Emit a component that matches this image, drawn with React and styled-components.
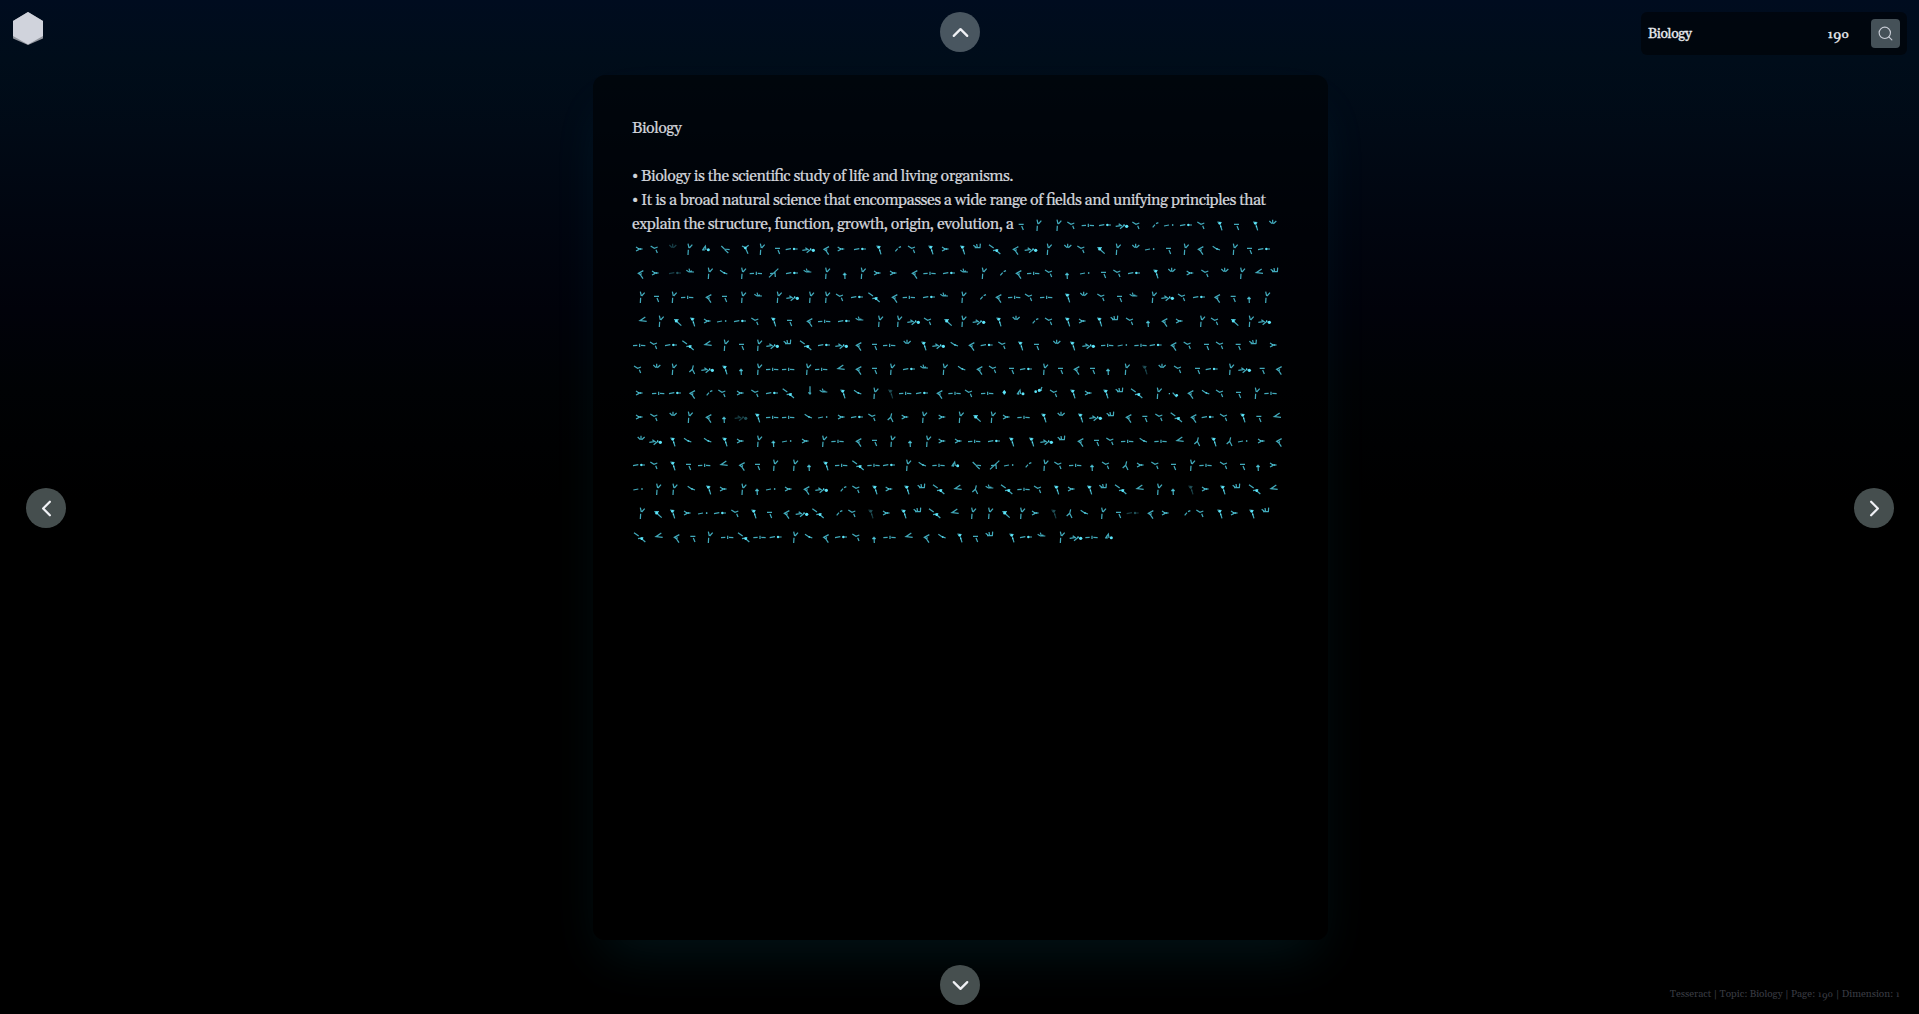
import React from "react";
import styled, { createGlobalStyle } from "styled-components";
import { ChevronUp, ChevronDown, ChevronLeft, ChevronRight, Search } from "lucide-react";

const GlobalStyle = createGlobalStyle`
  * { box-sizing: border-box; }
  body {
    margin: 0;
    background: #000;
    font-family: Gelasio, Georgia, "Liberation Serif", serif;
    font-feature-settings: "liga" 1;
    overflow: hidden;
  }
`;

const Page = styled.div`
  width: 100%;
  height: 100vh;
  display: grid;
  grid-template-columns: 593px 735px 1fr;
  grid-template-rows: 75px 865px 1fr;
  background: linear-gradient(
    to bottom,
    #000c1f 0,
    #000d1a 60px,
    #010a16 130px,
    #01050f 230px,
    #01020a 310px,
    #000204 390px,
    #000 500px
  );
`;

const TopLeft = styled.div`
  padding: 12px 13px;
  svg { display: block; }
`;

const Centered = styled.div`
  display: flex;
  justify-content: center;
  align-items: flex-start;
  padding: ${(p) => p.$top}px 1px 0 0;
`;

const TopRight = styled.div`
  display: flex;
  justify-content: flex-end;
  align-items: flex-start;
  padding: 12px 12px 0 0;
`;

const Side = styled.div`
  display: flex;
  justify-content: ${(p) => (p.$end ? "flex-end" : "flex-start")};
  align-items: flex-start;
  padding: 413px 25px 0 26px;
`;

const RoundButton = styled.button`
  width: 40px;
  height: 40px;
  padding: 0;
  border: 0;
  border-radius: 50%;
  display: flex;
  align-items: center;
  justify-content: center;
  color: #f0f1f5;
  background: ${(p) => p.$tone};
  position: relative;
`;

const SearchBar = styled.div`
  width: 266px;
  height: 43px;
  border-radius: 6px;
  background: rgba(0, 0, 0, 0.5);
  display: flex;
  align-items: center;
  padding: 0 7px;
  color: #e8eaee;
  font-size: 14px;
  letter-spacing: -0.42px;
  line-height: 20px;
  -webkit-text-stroke: 0.3px currentColor;
`;

const Topic = styled.span`
  width: 179px;
`;

const PageNumber = styled.span`
  flex: 1;
  letter-spacing: 0;
`;

const SearchButton = styled.button`
  width: 29px;
  height: 29px;
  padding: 0;
  border: 0;
  border-radius: 4px;
  background: #455158;
  color: #c9cdd6;
  display: flex;
  align-items: center;
  justify-content: center;
`;

const Panel = styled.main`
  border-radius: 12px;
  background: rgba(0, 0, 0, 0.5);
  padding: 41px 39px 40px;
  box-shadow: 0 25px 50px -12px rgba(20, 200, 238, 0.1);
  color: #d0d3da;
  font-size: 16px;
  letter-spacing: -0.525px;
  line-height: 24px;
  -webkit-text-stroke: 0.2px currentColor;
`;

const Line = styled.div`
  height: 24px;
  white-space: pre;
  display: flex;
`;

const Script = styled.svg`
  display: block;
  flex: none;
  width: ${(p) => p.$width}px;
  height: 24px;
  fill: none;
  stroke: #4fd0e4;
  stroke-width: 3.7;
  overflow: visible;
`;

const Footer = styled.footer`
  display: flex;
  justify-content: flex-end;
  align-items: flex-start;
  padding: 47px 19px 0 0;
  font-size: 10px;
  line-height: 14px;
  letter-spacing: -0.03px;
  color: #3a3c43;
  white-space: nowrap;
`;

const SmallDigit = styled.span`
  display: inline-block;
  transform: scaleX(1.2);
  font-size: 0.76em;
  line-height: 0;
  margin: 0 0.08em;
`;

const LowDigit = styled.span`
  line-height: 0;
  vertical-align: -0.18em;
`;

function OldStyle({ value }) {
  return [...String(value)].map((d, i) =>
    "012".includes(d) ? <SmallDigit key={i}>{d}</SmallDigit> : <LowDigit key={i}>{d}</LowDigit>
  );
}

/* Each sign: stroke path plus optional bright dots [x, y, r], around its own centre. */
const SIGNS = {
  k: ["M-4-17L-1-4M9-14L0-4M-3 1L-4 17"],
  y: ["M-13-10L-2-3L8-7M3 1L7 11"],
  w: ["M-10-13L-2-5M0-17V-5M11-13L2-5"],
  f: ["M-10-7L-2-2M-10 5L-2 1", [[-1, -1, 2.5], [4, -1, 2]], "M-2-1H10"],
  h: ["M-18 1L-5 0M2-5V5M6 0L19 1"],
  e: ["M-18 1L-2-2M4-1H18", [[7, -1, 3.5]]],
  p: ["M-18 3L-3 1M-9-5L1 2M-5 10L9-1", [[15, 3, 5], [7, -1, 2]]],
  c: ["M7-8L-8 0L-2 4L6 16M1 0L-1 5"],
  g: ["M-8-10L5-8M1-2L6 15", [[-1, -6, 4], [2, 4, 2]]],
  m: ["M-9-3H6M0 2L5 14"],
  i: ["M-7 6L0-2M3-5L10-8"],
  l: ["M7-13L-9-2L11 0"],
  s: ["M-11-10L-2-1L14 1M-1 1L10 11"],
  d: ["M-10 3L-1-10L1 2M-5-6V4", [[8, 1, 4.5]]],
  r: ["M-11-10L-1-5L9-12M-1-5L7 13", [[-1, -4, 4]]],
  n: ["M-11-9L0-2L11 2", [[2, -1, 2.5]]],
  u: ["M-11-9L-3-4H12M-3-14L0-5M6-8L1-4"],
  z: ["M15-14L-13 12M-10 1L5-1L6 11"],
  t: ["M1-2L2 17M-4 5L1 0L6 5", [[1, 4, 2]]],
  b: ["M-18-14L-4-4M-6 4L10 1M3 3L16 14", [[5, 4, 4]]],
  a: ["M4-12L1 0L-8 8M1 0L8 14"],
  o: ["M-15 2L0-1", [[11, -1, 2.5]]],
  v: ["M0 2L12 13M-10-5H4", [[-3, -1, 4.8]]],
  x: ["M-12-12L-4-6M-2-16L0-5M9-17L8-4M-8-5H9"],
  j: ["M0-21V1M-5-3L0 2L3-2"],
  1: ["M0-10V4", [[0, -3, 5]]],
  2: ["M7-10L11-19M0-6L11-10", [[-8, -5, 4], [3, -9, 4.5]]],
  3: ["M-2-2L10 11", [[-12, 1, 2], [10, 6, 4]]],
};

const FIRST = "m1205 k1255 k1315 y1355 h1403 e1455 p1505 y1550 i1605 o1647 e1698 y1745 g1800 m1851 g1907 w1958";

/* Left half | right half of every row, positions in thirds of a pixel. */
const ROWS = [
  "f58 y105 W158 k208 d257 s315 r377 k425 m474 e515 p565 c620 f663 e720 g777 i833 y877 g933 f976|g38 x82 b135 c198 p242 k296 w353 y395 v452 k503 w557 o600 m657 k707 c753 n799 k854 m900 e942",
  "c63 f106 E165 u210 k269 n311 k369 h407 z460 e516 u562 k621 t673 k728 f772 f820 c885 h928 e987|u42 k101 i158 c207 h249 y298 t350 o405 m462 y503 e552 g618 w665 f720 y767 w824 k876 l928 x974",
  "k65 m111 k161 h201 c267 m315 k369 u414 k476 p517 k573 k621 y661 e711 b763 c825 h866 e927 u972|k40 i98 c147 h192 y238 h288 g353 w401 y455 m510 u550 k611 p652 y697 e747 c803 m851 t896 k951",
  "l69 k122 v172 g218 f262 o306 e360 y407 g461 m510 c570 h612 e672 u718 k780 k837 p880 y925 v983|k40 p86 g147 w198 i255 y298 g353 f397 g449 x494 y541 t593 c645 f688 k756 y796 v853 k902 p943",
  "h57 y103 e153 b205 l264 k317 m366 k417 p457 x503 b558 e612 p664 c717 m765 h807 w861 g912 p955|n13 c66 e110 y158 g212 m261 w320 g368 p415 h471 o518 h571 e617 c672 y714 m771 y811 m866 x910 f970",
  "y55 w110 k161 a216 p262 g315 t362 k417 h456 h504 k564 h603 l663 c717 m765 k816 e867 u912 k974|n35 c90 y130 m186 e228 k285 m333 c381 m429 t473 k530 G585 w636 y685 m744 e785 k843 p883 m938 c988",
  "f58 h114 e165 c218 i267 y308 f361 y407 e456 b506 j570 u610 g669 n713 k766 G812 h855 e906 c960|h13 y58 h111 1163 d211 2265 y313 g369 f415 g468 x509 b561 k626 3670 c723 n767 y811 m867 k920 h961",
  "f58 y104 w159 k209 c267 t311 P362 g413 h456 h504 n565 o609 f664 e711 y758 a811 f855 k912 f966|k32 v80 k128 f169 h220 g282 w333 g392 p436 x482 c537 m586 y629 b680 c732 e773 y823 g879 m928 l982",
  "w63 p106 g159 n203 n263 g315 f361 k417 t459 o501 f556 k612 h652 c717 m765 k817 t869 k924 f966|f25 h72 e132 g185 g245 p289 x335 c393 m441 y482 h531 n580 h631 l690 a741 g792 a838 o879 f934 c988",
  "e57 y104 g159 m207 h252 l312 c367 m414 k465 k525 t566 g618 h663 b715 h760 e807 k864 n907 h955|d15 s79 z133 o177 i234 k286 y326 h375 t425 y469 a526 f571 y617 m672 k726 h766 y823 m879 t923 f970",
  "o55 k114 k163 n214 g266 f310 k370 t410 o453 f505 c561 p604 i669 y710 g765 f807 g861 x905 b957|l24 a75 u118 b171 h220 y265 g320 f364 g419 x460 b513 l570 k627 t668 G723 f766 g819 x860 b915 l972",
  "k65 v113 g158 f202 o249 e300 y347 g402 m450 c501 p545 b595 i657 y698 G753 f799 g852 x893 b945|l15 k69 k120 v167 k216 f256 G312 a358 n403 k459 m507 E548 c603 f646 i711 y752 g810 f853 g906 x947",
  "b60 l117 c171 m220 k269 h321 b372 h418 e467 k525 n566 c619 e663 y710 t761 h808 l867 c921 n966|g30 m78 x119 g186 e228 u274 k335 p377 h424 d476",
];

function Sign({ name, x }) {
  const key = name.toLowerCase();
  const [path, dots = [], extra = ""] = SIGNS[key];
  return (
    <g transform={`translate(${x} 40)`} opacity={key !== name ? 0.35 : 1}>
      <path d={path + extra} opacity="0.82" />
      {dots.map(([cx, cy, r], i) => (
        <circle key={i} cx={cx} cy={cy} r={r} fill="#5ce6fa" stroke="none" />
      ))}
    </g>
  );
}

function ScriptRow({ signs, start, end }) {
  return (
    <Script $width={(end - start) / 3} viewBox={`${start} 0 ${end - start} 72`}>
      {signs.map(([name, x], i) => (
        <Sign key={i} name={name} x={x} />
      ))}
    </Script>
  );
}

const parse = (text, offset = 0) =>
  text.split(" ").map((s) => [s[0], Number(s.slice(1)) + offset]);

const parseRow = (row) => {
  const [left, right] = row.split("|");
  return [...parse(left), ...parse(right, 990)];
};

const LeadText = styled.span`
  width: 382px;
  flex: none;
`;

export default function App() {
  return (
    <>
      <GlobalStyle />
      <Page>
        <TopLeft>
          <svg width="30" height="33" viewBox="0 0 30 33">
            <path d="M15 0L30 9V26.500L15 33L0 26.500V9Z" fill="#8f939b" />
            <path d="M15 0L30 9V24L15 32.500L0 24V9Z" fill="#d0d3dc" />
          </svg>
        </TopLeft>
        <Centered $top={12}>
          <RoundButton $tone="#495660" aria-label="Up"><ChevronUp size={27} /></RoundButton>
        </Centered>
        <TopRight>
          <SearchBar>
            <Topic>Biology</Topic>
            <PageNumber><OldStyle value="190" /></PageNumber>
            <SearchButton aria-label="Search"><Search size={17} strokeWidth={1.6} /></SearchButton>
          </SearchBar>
        </TopRight>

        <Side><RoundButton $tone="#454e4e" aria-label="Previous"><ChevronLeft size={27} /></RoundButton></Side>
        <Panel>
          <Line>Biology</Line>
          <Line />
          <Line>• Biology is the scientific study of life and living organisms.</Line>
          <Line>• It is a broad natural science that encompasses a wide range of fields and unifying principles that</Line>
          <Line>
            <LeadText>explain the structure, function, growth, origin, evolution, a</LeadText>
            <ScriptRow signs={parse(FIRST)} start={1182} end={1998} />
          </Line>
          {ROWS.map((row, i) => (
            <Line key={i}>
              <ScriptRow signs={parseRow(row)} start={36} end={1998} />
            </Line>
          ))}
        </Panel>
        <Side $end><RoundButton $tone="#454e4e" aria-label="Next"><ChevronRight size={27} /></RoundButton></Side>

        <div />
        <Centered $top={25}>
          <RoundButton $tone="#464f4f" aria-label="Down"><ChevronDown size={27} /></RoundButton>
        </Centered>
        <Footer>
          <span>Tesseract | Topic: Biology | Page: <OldStyle value="190" /> | Dimension: <OldStyle value="1" /></span>
        </Footer>
      </Page>
    </>
  );
}
